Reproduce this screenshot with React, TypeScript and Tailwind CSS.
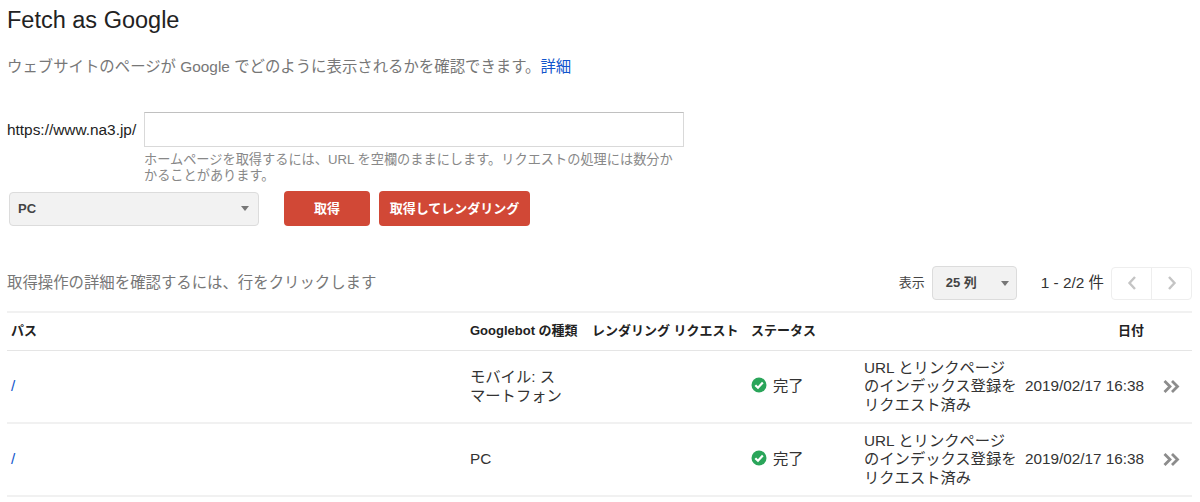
import React from 'react';

const font = "font-['Liberation_Sans','Noto_Sans_CJK_JP',sans-serif]";

const rows = [
  { type: ['モバイル: ス', 'マートフォン'] },
  { type: ['PC'] },
];

const gridCols = 'grid grid-cols-[459px_122px_159px_113px_161px_139px_32px]';

const Caret = () => (
  <span className="w-0 h-0 border-x-[4px] border-x-transparent border-t-[5px] border-t-[#777]" />
);

const CheckIcon = () => (
  <svg width="16" height="16" viewBox="0 0 16 16" className="-mt-[4px]">
    <circle cx="8" cy="8" r="7.5" fill="#2aa55a" />
    <path d="M4.3 8.2 7 10.8 11.8 5.6" fill="none" stroke="#fff" strokeWidth="2.2" />
  </svg>
);

const Chevrons = () => (
  <svg width="18" height="13" viewBox="0 0 18 13" className="ml-[3px]">
    <path d="M1.5 1 7 6.5 1.5 12M9 1 14.5 6.5 9 12" fill="none" stroke="#8c8c8c" strokeWidth="2.8" />
  </svg>
);

const App: React.FC = () => {
  return (
    <div className={`${font} w-[1200px] h-[502px] overflow-hidden bg-white pl-[7px] pr-2 text-[#222]`}>
      <h1 className="text-[23.5px] leading-[26px] pt-[7px] text-[#222]">Fetch as Google</h1>

      <p className="mt-[24px] text-[15.4px] leading-[20px] text-[#777]">
        ウェブサイトのページが Google でどのように表示されるかを確認できます。
        <a className="text-[#1155cc]">詳細</a>
      </p>

      <div className="mt-[35px] flex items-center">
        <span className="w-[137px] text-[15.4px] text-[#222]">https://www.na3.jp/</span>
        <input className="w-[540px] h-[35px] bg-white border border-[#d9d9d9] border-t-[#c0c0c0] outline-none" />
      </div>
      <p className="mt-[5px] ml-[137px] w-[540px] text-[13.2px] leading-[15.5px] text-[#888]">
        ホームページを取得するには、URL を空欄のままにします。リクエストの処理には数分かかることがあります。
      </p>

      <div className="mt-[8px] flex items-center">
        <div className="ml-[2px] w-[250px] h-[34px] flex items-center justify-between pl-2 pr-[9px] rounded-sm border border-[#dcdcdc] bg-[#f2f2f2] text-[13px] font-bold text-[#444]">
          PC
          <Caret />
        </div>
        <button className="ml-[25px] w-[86px] h-[35px] rounded-sm bg-[#d14836] text-white text-[13px] font-bold">取得</button>
        <button className="ml-[9px] w-[151px] h-[35px] rounded-sm bg-[#d14836] text-white text-[13px] font-bold">取得してレンダリング</button>
      </div>

      <div className="mt-[40px] h-[34px] flex items-center">
        <span className="text-[15.4px] text-[#777]">取得操作の詳細を確認するには、行をクリックします</span>
        <span className="ml-auto text-[13px] text-[#444]">表示</span>
        <div className="ml-[7px] w-[85px] h-[34px] flex items-center justify-between pl-[13px] pr-[7px] rounded-sm border border-[#dcdcdc] bg-[#f2f2f2] text-[13px] font-bold text-[#444]">
          25 列
          <Caret />
        </div>
        <span className="ml-[24px] text-[15.4px] text-[#333]">1 - 2/2 件</span>
        <div className="ml-[7px] w-[81px] h-[33px] flex rounded-sm border border-[#eeeeee]">
          <div className="flex-1 flex items-center justify-center border-r border-[#eeeeee]">
            <svg width="10" height="16" viewBox="0 0 10 16">
              <path d="M8 2 2.5 8 8 14" fill="none" stroke="#c4c4c4" strokeWidth="2.4" />
            </svg>
          </div>
          <div className="flex-1 flex items-center justify-center">
            <svg width="10" height="16" viewBox="0 0 10 16">
              <path d="M2 2 7.5 8 2 14" fill="none" stroke="#c4c4c4" strokeWidth="2.4" />
            </svg>
          </div>
        </div>
      </div>

      <div className="mt-[11px] border-t-2 border-[#f1f1f1]">
        <div className={`${gridCols} h-[38px] items-center border-b border-[#e5e5e5] text-[13px] font-bold text-[#222]`}>
          <span className="pl-1 pb-[2px]">パス</span>
          <span className="pl-1 pb-[2px]">Googlebot の種類</span>
          <span className="pl-1 pb-[2px]">レンダリング リクエスト</span>
          <span className="pl-1 pb-[2px]">ステータス</span>
          <span />
          <span className="pr-[16px] pb-[2px] text-right">日付</span>
          <span />
        </div>
        {rows.map((row, i) => (
          <div key={i} className={`${gridCols} h-[73px] items-center border-b-2 border-[#f1f1f1] text-[15.3px] leading-[18.5px] text-[#333]`}>
            <a className="pl-1 text-[#1155cc]">/</a>
            <div className="pl-1">
              {row.type.map((line) => (
                <div key={line}>{line}</div>
              ))}
            </div>
            <span />
            <div className="pl-1 flex items-center gap-[6px]">
              <CheckIcon />
              完了
            </div>
            <div className="pl-1 pr-1">URL とリンクページのインデックス登録をリクエスト済み</div>
            <div className="whitespace-nowrap pl-1">2019/02/17 16:38</div>
            <Chevrons />
          </div>
        ))}
      </div>
    </div>
  );
};

export default App;
